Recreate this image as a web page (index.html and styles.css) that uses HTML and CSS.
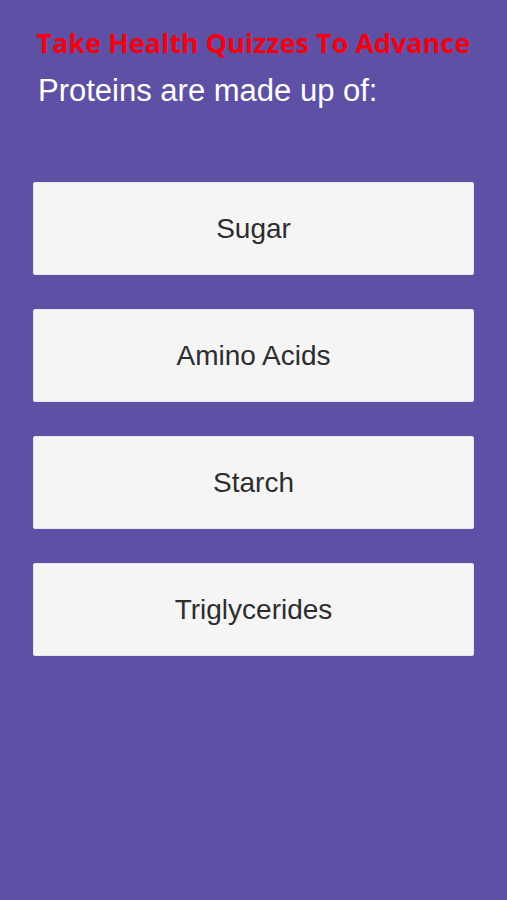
FILE: index.html
```html
<!DOCTYPE html>
<html>
<head>
<meta charset="utf-8">
<link rel="stylesheet" href="styles.css">
</head>
<body>
<div class="screen">
  <h1 class="title">Take Health Quizzes To Advance</h1>
  <p class="question">Proteins are made up of:</p>
  <div class="answers">
    <button class="answer">Sugar</button>
    <button class="answer">Amino Acids</button>
    <button class="answer">Starch</button>
    <button class="answer">Triglycerides</button>
  </div>
</div>
</body>
</html>
```
FILE: styles.css
```css
html, body {
  margin: 0;
  padding: 0;
  background: #5e50a4;
}
.screen {
  width: 507px;
  height: 900px;
  background: #5e50a4;
  display: flex;
  flex-direction: column;
}
.title {
  margin: 25px 0 0 0;
  text-align: center;
  font-family: "Open Sans", sans-serif;
  font-weight: 700;
  font-size: 27px;
  line-height: 36px;
  color: #f40010;
}
.question {
  margin: 12px 0 0 38px;
  font-family: "Liberation Sans", Arial, sans-serif;
  font-size: 31px;
  line-height: 36px;
  color: #ffffff;
}
.answers {
  margin: 73px 33px 0 33px;
  display: flex;
  flex-direction: column;
  gap: 34px;
}
.answer {
  height: 93px;
  background: #f5f5f6;
  border: 1px solid #e6e6ea;
  border-radius: 2px;
  font-family: "Liberation Sans", Arial, sans-serif;
  font-size: 28px;
  color: #2d2d2d;
  padding: 0;
}
```
